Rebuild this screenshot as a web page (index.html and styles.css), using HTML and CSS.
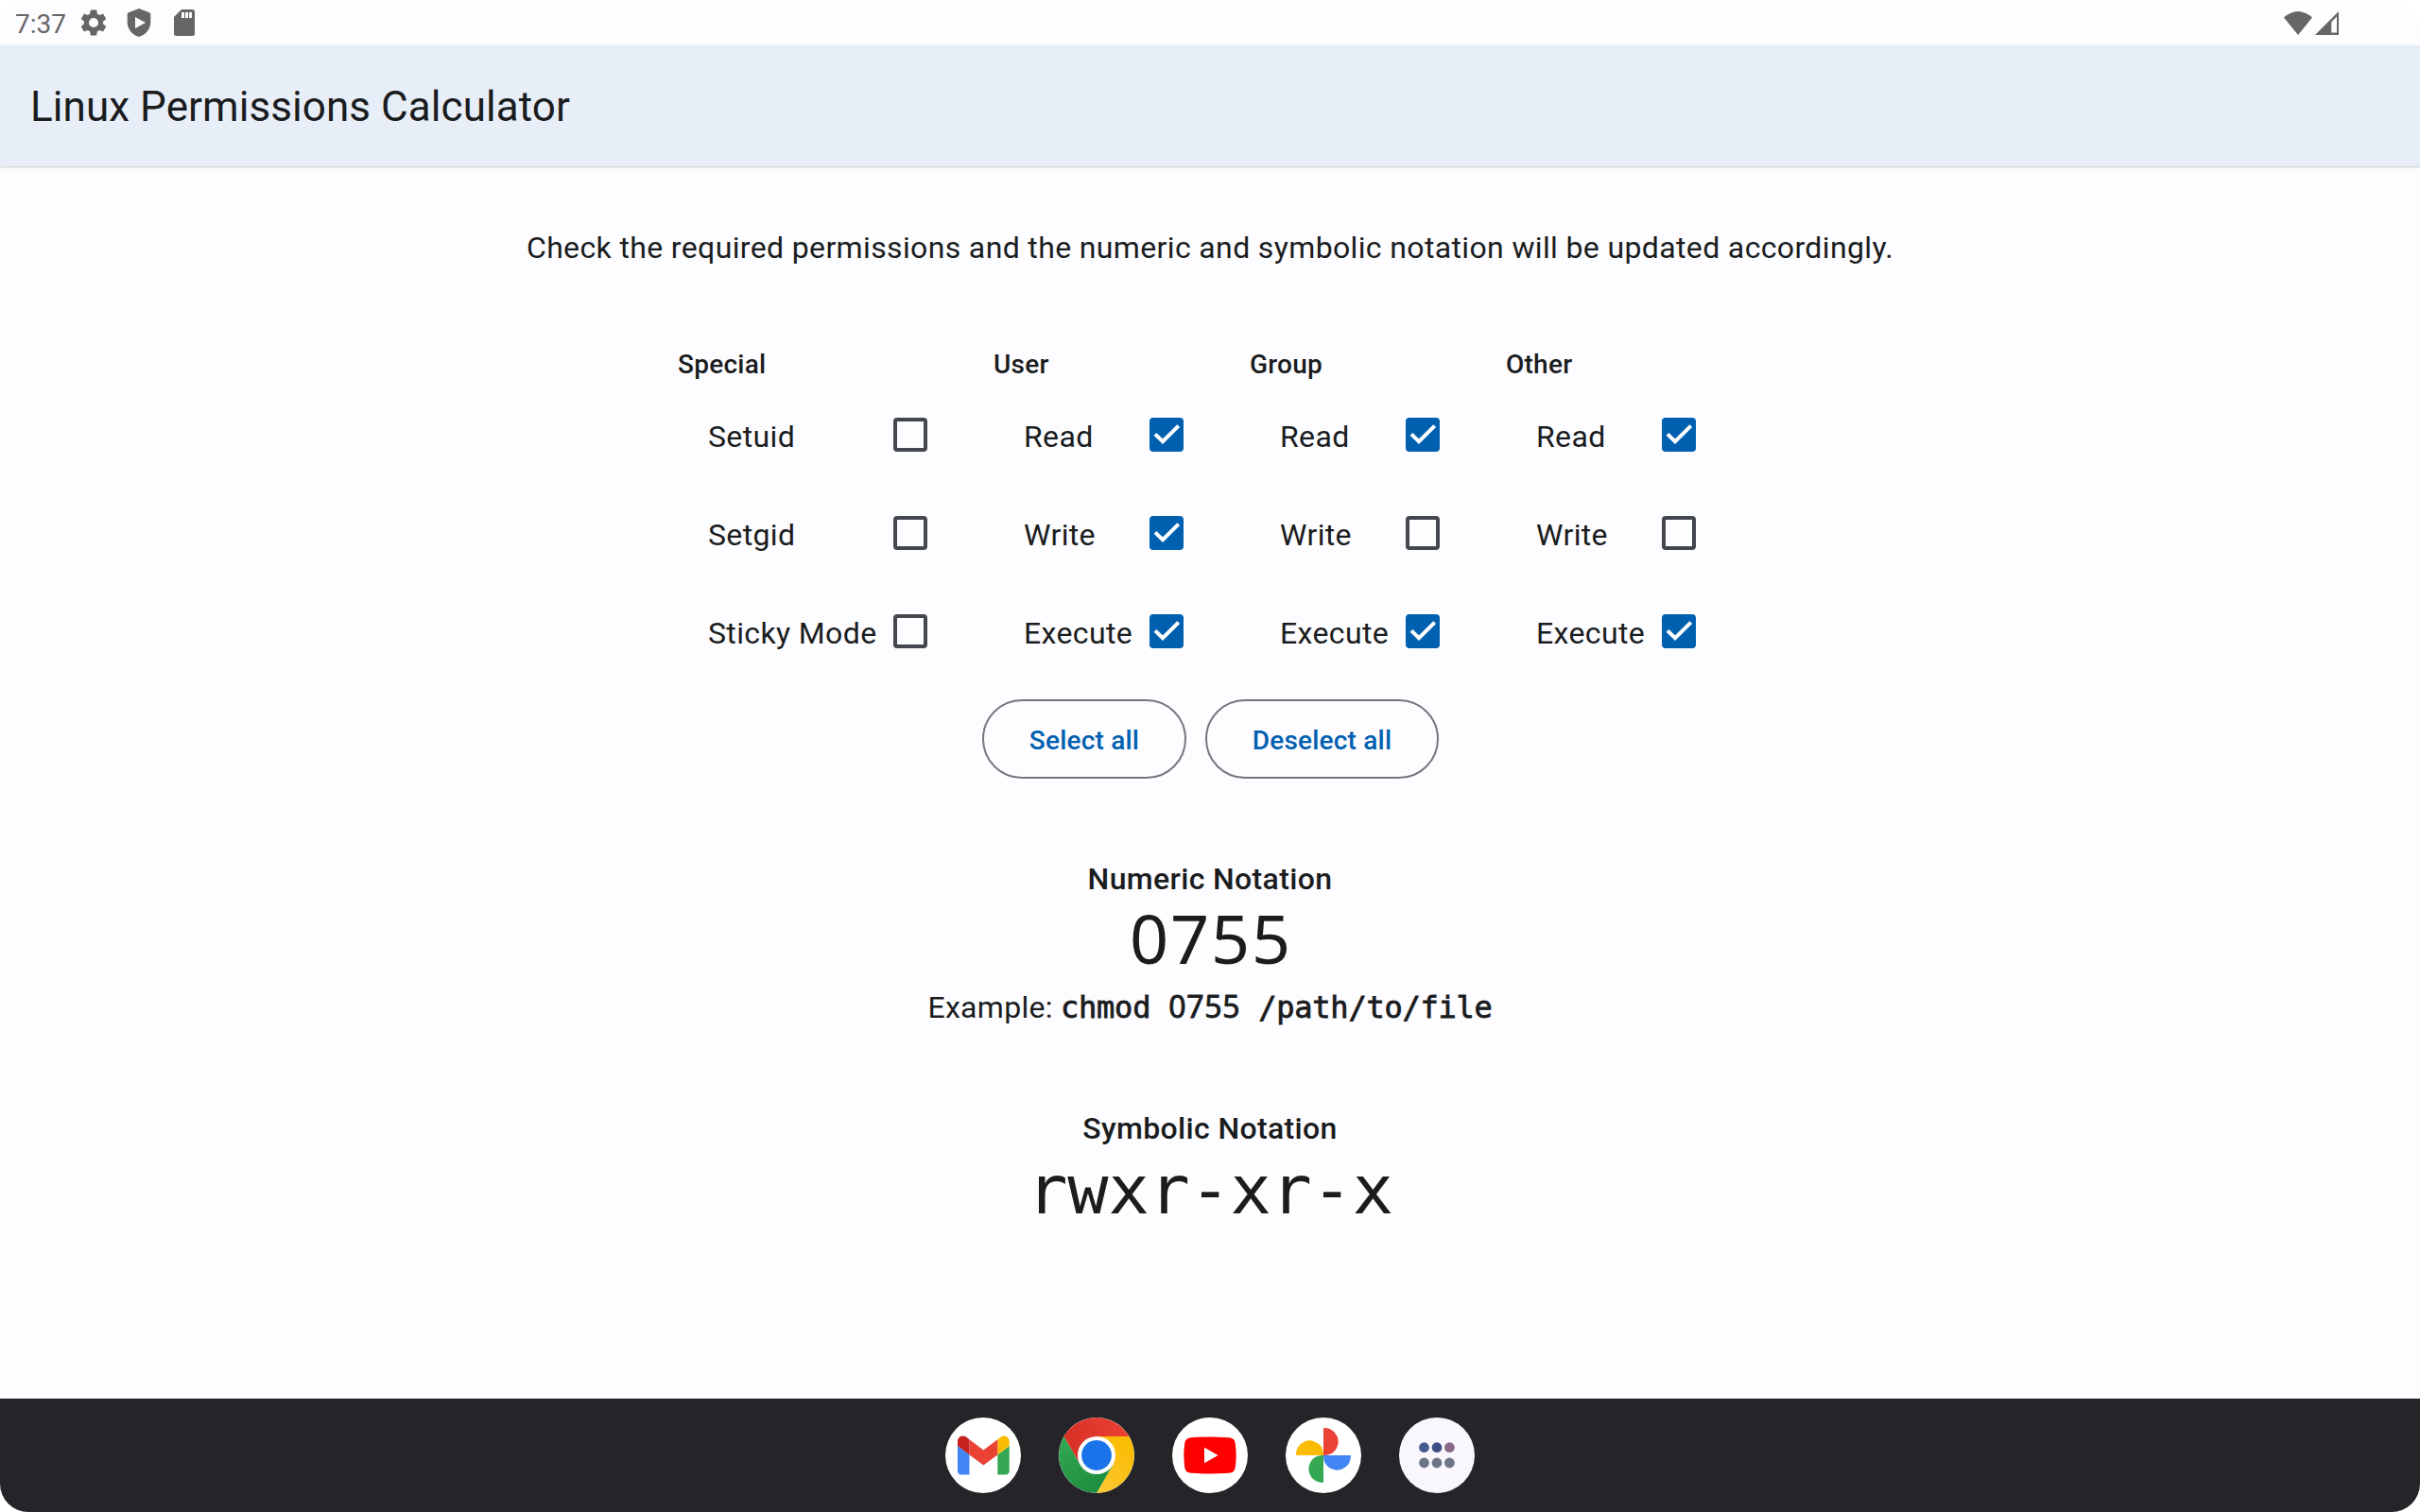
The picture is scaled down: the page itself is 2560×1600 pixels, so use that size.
FILE: index.html
```html
<!DOCTYPE html>
<html lang="en">
<head>
<meta charset="utf-8">
<title>Linux Permissions Calculator</title>
<link rel="stylesheet" href="styles.css">
</head>
<body>
<div class="screen">
  <header class="status">
    <span class="clock">7:37</span>
    <svg class="gear" viewBox="2 2 20 20" preserveAspectRatio="none"><path d="M19.14 12.94c.04-.3.06-.61.06-.94 0-.32-.02-.64-.07-.94l2.03-1.58a.49.49 0 0 0 .12-.61l-1.92-3.32a.488.488 0 0 0-.59-.22l-2.39.96c-.5-.38-1.03-.7-1.62-.94l-.36-2.54a.484.484 0 0 0-.48-.41h-3.84c-.24 0-.43.17-.47.41l-.36 2.54c-.59.24-1.13.57-1.62.94l-2.39-.96c-.22-.08-.47 0-.59.22L2.74 8.87c-.12.21-.08.47.12.61l2.03 1.58c-.05.3-.09.63-.09.94s.02.64.07.94l-2.03 1.58a.49.49 0 0 0-.12.61l1.92 3.32c.12.22.37.29.59.22l2.39-.96c.5.38 1.03.7 1.62.94l.36 2.54c.05.24.24.41.48.41h3.84c.24 0 .44-.17.47-.41l.36-2.54c.59-.24 1.13-.56 1.62-.94l2.39.96c.22.08.47 0 .59-.22l1.92-3.32c.12-.22.07-.47-.12-.61l-2.01-1.58zM12 15.6A3.6 3.6 0 1 1 12 8.4a3.6 3.6 0 0 1 0 7.2z"/></svg>
    <svg class="shield" viewBox="0 0 26 30"><path fill-rule="evenodd" d="M13 0 24 4.2Q25.3 4.8 25.3 6V14C25.3 22 20 28 13 30 6 28 .7 22 .7 14V6Q.7 4.8 2 4.2ZM9 9V21L20 15Z"/></svg>
    <svg class="sdcard" viewBox="0 0 22 28"><path fill-rule="evenodd" d="M8 0H19.5Q22 0 22 2.5V25.5Q22 28 19.5 28H2.5Q0 28 0 25.5V8ZM8 3V9H11V3ZM12 3V9H15V3ZM16 3V9H19V3Z"/></svg>
    <svg class="wifi" viewBox="0 0 30 25"><path d="M0 6.6Q15-6.4 30 6.6L15 25Z"/></svg>
    <svg class="signal" viewBox="0 0 25 25"><path fill-rule="evenodd" d="M25 0V25H0ZM23 5.5 17.3 11.2V22.5H23Z"/></svg>
  </header>
  <div class="appbar"><h1>Linux Permissions Calculator</h1></div>
  <main>
    <p class="intro">Check the required permissions and the numeric and symbolic notation will be updated accordingly.</p>
    <section class="permissions">
      <div class="group">
        <h2>Special</h2>
        <label class="option">Setuid<span class="box"></span></label>
        <label class="option">Setgid<span class="box"></span></label>
        <label class="option">Sticky Mode<span class="box"></span></label>
      </div>
      <div class="group">
        <h2>User</h2>
        <label class="option">Read<span class="box on"><svg viewBox="0 0 36 36"><path d="M6 17.3 14 25.2 30.7 8.6"/></svg></span></label>
        <label class="option">Write<span class="box on"><svg viewBox="0 0 36 36"><path d="M6 17.3 14 25.2 30.7 8.6"/></svg></span></label>
        <label class="option">Execute<span class="box on"><svg viewBox="0 0 36 36"><path d="M6 17.3 14 25.2 30.7 8.6"/></svg></span></label>
      </div>
      <div class="group">
        <h2>Group</h2>
        <label class="option">Read<span class="box on"><svg viewBox="0 0 36 36"><path d="M6 17.3 14 25.2 30.7 8.6"/></svg></span></label>
        <label class="option">Write<span class="box"></span></label>
        <label class="option">Execute<span class="box on"><svg viewBox="0 0 36 36"><path d="M6 17.3 14 25.2 30.7 8.6"/></svg></span></label>
      </div>
      <div class="group">
        <h2>Other</h2>
        <label class="option">Read<span class="box on"><svg viewBox="0 0 36 36"><path d="M6 17.3 14 25.2 30.7 8.6"/></svg></span></label>
        <label class="option">Write<span class="box"></span></label>
        <label class="option">Execute<span class="box on"><svg viewBox="0 0 36 36"><path d="M6 17.3 14 25.2 30.7 8.6"/></svg></span></label>
      </div>
    </section>
    <div class="actions">
      <button class="select">Select all</button>
      <button class="deselect">Deselect all</button>
    </div>
    <section class="numeric">
      <h3>Numeric Notation</h3>
      <div class="octal">0755</div>
      <p class="example">Example: <span class="command">chmod <span class="digits">0755</span> /path/to/file</span></p>
    </section>
    <section class="symbolic">
      <h3>Symbolic Notation</h3>
      <div class="flags">rwxr-xr-x</div>
    </section>
  </main>
  <nav class="taskbar">
    <div class="app">
      <svg viewBox="0 0 80 80"><g transform="translate(13 19.5) scale(.622) translate(-52 -42)"><path fill="#4285f4" d="M58 108h14V74L52 59v43c0 3.32 2.69 6 6 6"/><path fill="#34a853" d="M120 108h14c3.32 0 6-2.69 6-6V59l-20 15"/><path fill="#fbbc04" d="M120 48v26l20-15v-8c0-7.42-8.47-11.65-14.4-7.2"/><path fill="#ea4335" d="M72 74V48l24 18 24-18v26L96 92"/><path fill="#c5221f" d="M52 51v8l20 15V48l-5.6-4.2c-5.94-4.45-14.4-.22-14.4 7.2"/></g></svg>
    </div>
    <div class="app">
      <svg viewBox="0 0 80 80">
        <defs>
          <linearGradient id="red" x1="0" y1="0" x2="1" y2="0"><stop offset="0" stop-color="#d93025"/><stop offset="1" stop-color="#ea4335"/></linearGradient>
          <linearGradient id="yellow" x1="0" y1="1" x2=".5" y2="0"><stop offset="0" stop-color="#fcc934"/><stop offset="1" stop-color="#fbbc04"/></linearGradient>
          <linearGradient id="green" x1=".7" y1="1" x2="0" y2="0"><stop offset="0" stop-color="#1e8e3e"/><stop offset="1" stop-color="#34a853"/></linearGradient>
        </defs>
        <path fill="url(#red)" d="M5.4 20A40 40 0 0 1 74.6 20H40L22.7 50Z"/>
        <path fill="url(#yellow)" d="M74.6 20A40 40 0 0 1 40 80L57.3 50 40 20Z"/>
        <path fill="url(#green)" d="M5.4 20A40 40 0 0 0 40 80L57.3 50H22.7Z"/>
        <circle cx="40" cy="40" r="20" fill="#fff"/><circle cx="40" cy="40" r="15.9" fill="#1a73e8"/>
      </svg>
    </div>
    <div class="app">
      <svg viewBox="0 0 80 80"><path fill="#f00" d="M20 21.2Q40 19.8 60 21.2 66 21.6 66.7 27 68.6 40 66.7 53 66 58.4 60 58.8 40 60.2 20 58.8 14 58.4 13.3 53 11.4 40 13.3 27 14 21.6 20 21.2Z"/><path fill="#fff" d="M34 31.7V48.3L48.6 40Z"/></svg>
    </div>
    <div class="app">
      <svg viewBox="0 0 80 80"><path fill="#ea4335" d="M40 40V12Q40 11 41 11A14.6 14.6 0 0 1 51.3 36Q47.5 40 40 40Z"/><path fill="#4285f4" d="M40 40H68Q69 40 69 41A14.6 14.6 0 0 1 44 51.3Q40 47.5 40 40Z"/><path fill="#34a853" d="M40 40V68Q40 69 39 69A14.6 14.6 0 0 1 28.7 44Q32.5 40 40 40Z"/><path fill="#fbbc04" d="M40 40H12Q11 40 11 39A14.6 14.6 0 0 1 36 28.7Q40 32.5 40 40Z"/></svg>
    </div>
    <div class="app all-apps">
      <svg viewBox="0 0 80 80"><circle cx="26.5" cy="31.7" r="5.4" fill="#475d92"/><circle cx="40" cy="31.7" r="5.4" fill="#3d4f86"/><circle cx="53.4" cy="31.7" r="5.4" fill="#8a6a88"/><g fill="#6d7587"><circle cx="26.5" cy="48" r="5.4"/><circle cx="40" cy="48" r="5.4"/><circle cx="53.4" cy="48" r="5.4"/></g></svg>
    </div>
  </nav>
</div>
</body>
</html>
```
FILE: styles.css
```css
* { box-sizing: border-box; margin: 0; padding: 0; }
body { background: #fff; font-family: Roboto, sans-serif; color: #1a1c1e; }
svg { display: block; }
.screen {
  width: 2560px;
  height: 1600px;
  display: flex;
  flex-direction: column;
  overflow: hidden;
  border-radius: 30px;
  background: #fdfcff;
}

.status { height: 48px; flex: none; display: flex; align-items: center; padding: 0 86px 0 16px; fill: #666; }
.clock { width: 69px; padding-top: 3px; font-size: 28px; line-height: 32px; color: #666; }
.gear { width: 28px; height: 28px; }
.shield { width: 26px; height: 30px; margin-left: 21px; }
.sdcard { width: 22px; height: 28px; margin-left: 24px; }
.wifi { width: 30px; height: 25px; margin-left: auto; }
.signal { width: 25px; height: 25px; margin: 1px 0 0 3px; }

.appbar {
  height: 128px;
  flex: none;
  display: flex;
  align-items: center;
  padding: 2px 32px 0;
  background: #e7eef8;
  box-shadow: 0 1px 2px rgba(0, 0, 0, .2);
}
h1 { font-size: 44px; font-weight: 400; line-height: 56px; letter-spacing: .07px; }

main { flex: 1; display: flex; flex-direction: column; align-items: center; padding-top: 62px; }
.intro { font-size: 32px; line-height: 48px; letter-spacing: .36px; }

.permissions { display: grid; grid-template-columns: 334px 271px 271px 250px; margin-top: 80px; }
.group { display: flex; flex-direction: column; }
h2 { height: 42px; font-size: 28px; font-weight: 500; line-height: 40px; letter-spacing: .25px; }
.option {
  height: 104px;
  display: flex;
  align-items: center;
  justify-content: space-between;
  padding: 4px 70px 0 32px;
  font-size: 32px;
  line-height: 48px;
  letter-spacing: .36px;
  white-space: nowrap;
}
.group:last-child .option { padding-right: 49px; }
.box { width: 36px; height: 36px; flex: none; margin-bottom: 4px; border: 4px solid #43474e; border-radius: 4px; }
.box.on { border: 0; background: #0060b0; }
.box path { fill: none; stroke: #fff; stroke-width: 4; }

.actions { display: flex; gap: 20px; margin-top: 20px; }
button {
  height: 84px;
  padding: 3px 0 0 1px;
  border: 2px solid #74777f;
  border-radius: 42px;
  background: none;
  font: 500 28px/40px Roboto, sans-serif;
  letter-spacing: .2px;
  color: #0060b0;
}
.select { width: 216px; }
.deselect { width: 247px; }

.numeric, .symbolic { display: flex; flex-direction: column; align-items: center; }
.numeric { margin-top: 82px; }
.symbolic { margin-top: 80px; }
h3 { font-size: 32px; font-weight: 500; line-height: 48px; letter-spacing: .35px; }
.octal { padding-left: 2px; font: 72px/76px "Noto Sans", sans-serif; letter-spacing: 1.8px; }
.example { margin-top: 12px; font-size: 32px; line-height: 48px; letter-spacing: .3px; }
.command { font-family: "DejaVu Sans Mono", monospace; line-height: 0; letter-spacing: -.24px; -webkit-text-stroke: .8px #1a1c1e; }
.digits { font-family: "Noto Sans", sans-serif; letter-spacing: .7px; }
.flags { font: 72px/82px "DejaVu Sans Mono", monospace; letter-spacing: -.3px; }

.taskbar { height: 120px; flex: none; display: flex; align-items: center; justify-content: center; gap: 40px; background: #252529; }
.app { width: 80px; height: 80px; border-radius: 50%; overflow: hidden; background: #fff; }
.all-apps { background: #f9f7fd; }
```
